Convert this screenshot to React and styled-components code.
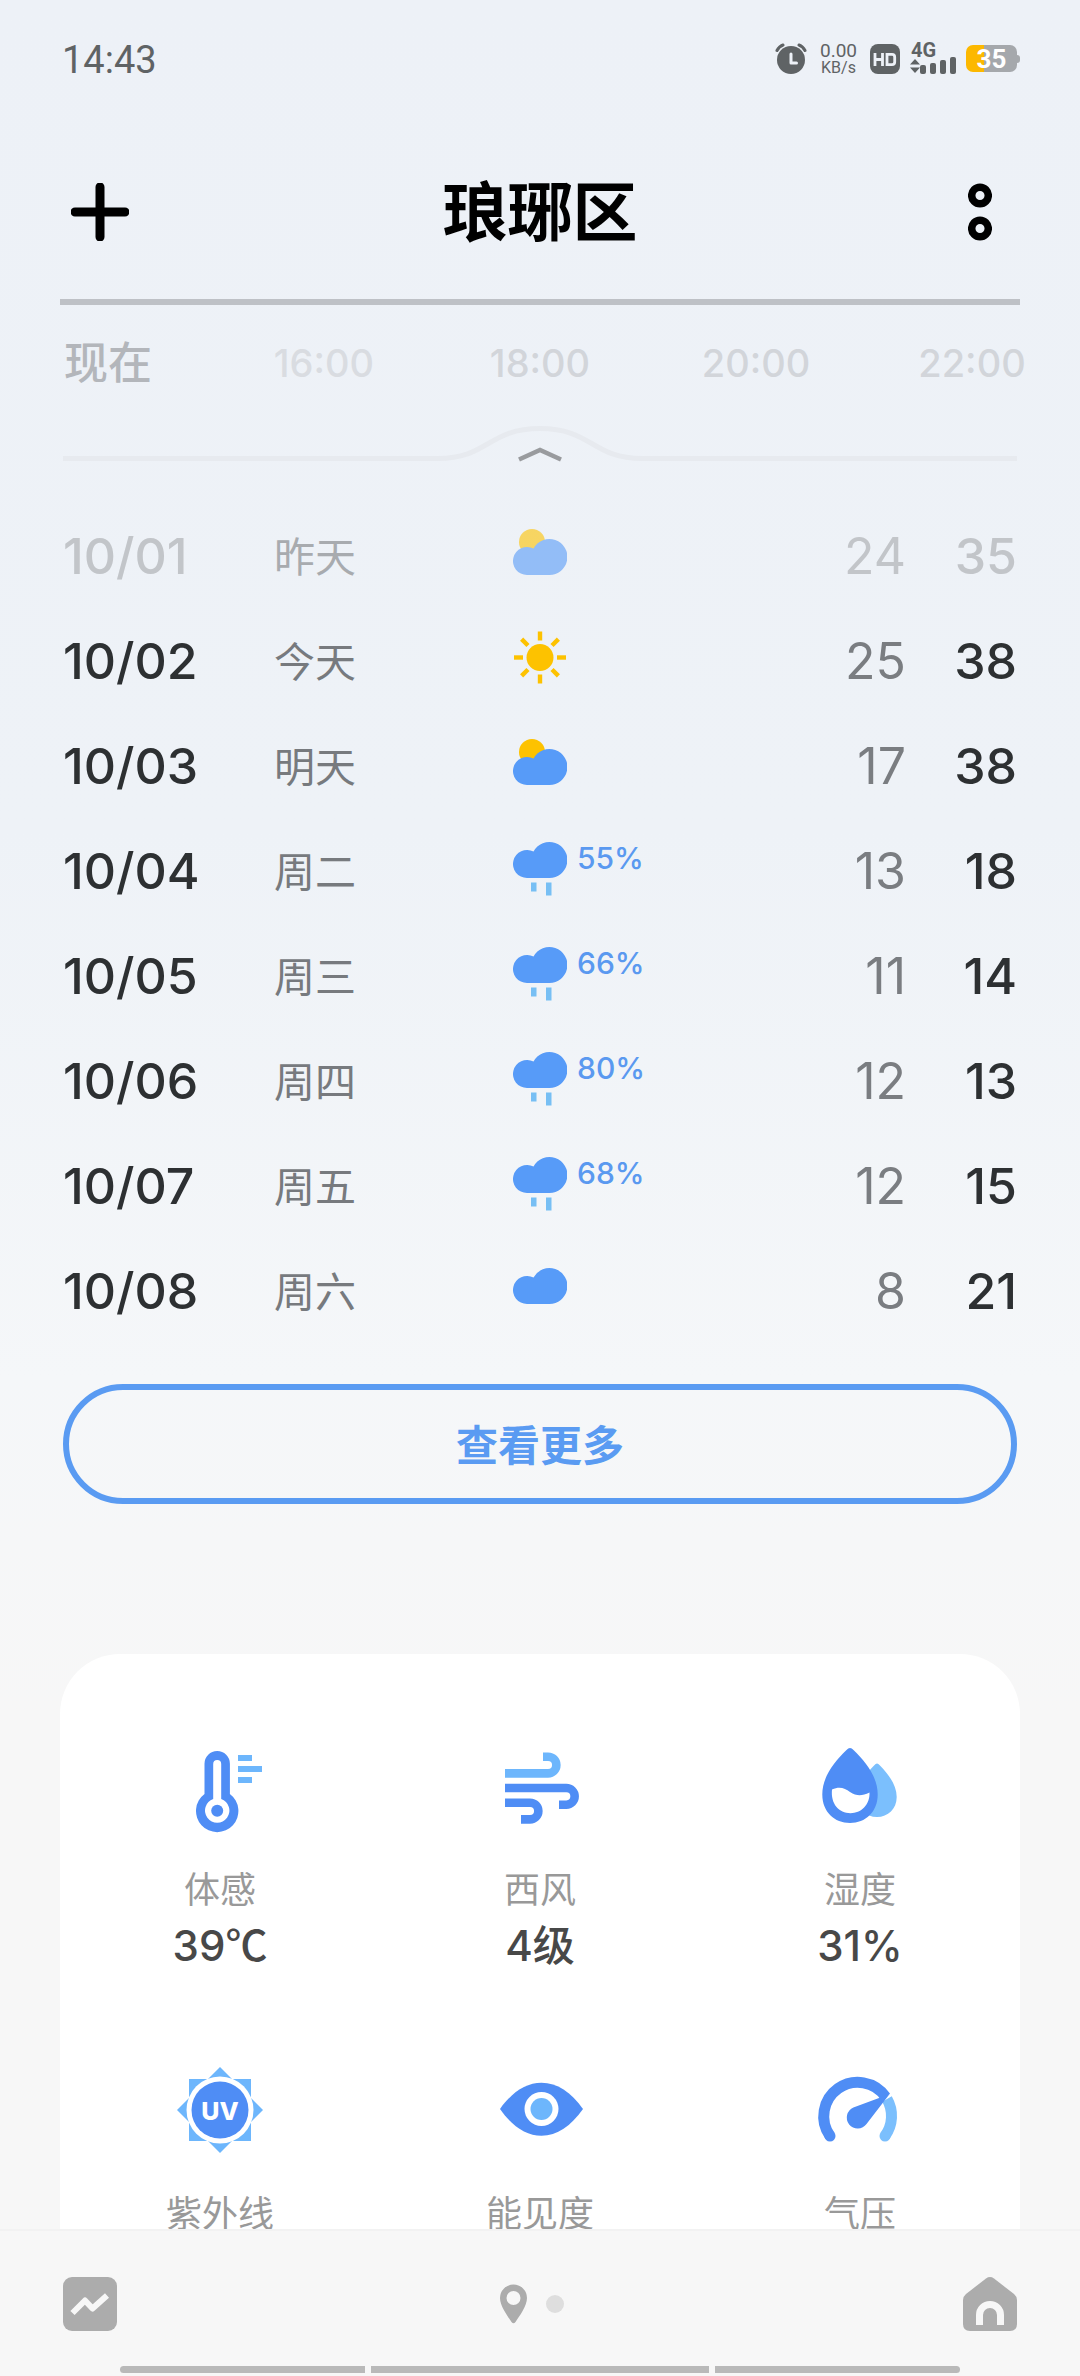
import React from 'react'
import styled, { createGlobalStyle } from 'styled-components'

const GlobalStyle = createGlobalStyle`
  * {
    box-sizing: border-box;
  }
  body {
    margin: 0;
    background: #f7f7f7;
    font-family: Inter, "Noto Sans CJK SC", sans-serif;
  }
  button {
    padding: 0;
    border: none;
    background: none;
    font-family: inherit;
    cursor: pointer;
  }
  svg {
    display: block;
  }
`
const Screen = styled.div`
  display: flex;
  flex-direction: column;
  height: 100vh;
  background: linear-gradient(#edf1f7 0%, #eef2f7 35%, #f5f7f9 58%, #f7f7f7 72%);
`
const StatusBar = styled.div`
  display: flex;
  flex-shrink: 0;
  align-items: center;
  justify-content: space-between;
  height: 120px;
  padding: 0 60px 0 62px;
  color: #5f6365;
  font-family: Roboto, sans-serif;
`
const Clock = styled.time`
  font-size: 38px;
`
const StatusIcons = styled.div`
  display: flex;
  align-items: center;
  gap: 10px;
  padding-bottom: 3px;
`
const NetSpeed = styled.div`
  display: flex;
  flex-direction: column;
  align-items: center;
  margin: 0 3px;
  font-size: 16px;
  line-height: 17px;
`
const SpeedValue = styled.span`
  font-size: 19px;
`
const Battery = styled.div`
  display: flex;
  align-items: center;
`
const BatteryBody = styled.div`
  width: 51px;
  height: 27px;
  border-radius: 7px;
  background: linear-gradient(90deg, #fcb800 35%, #a5a8ac 35%);
  color: #fff;
  font-size: 26px;
  font-weight: 700;
  line-height: 29px;
  text-align: center;
`
const BatteryTip = styled.div`
  width: 3px;
  height: 8px;
  border-radius: 0 3px 3px 0;
  background: #a5a8ac;
`
const Header = styled.header`
  display: flex;
  flex-shrink: 0;
  align-items: center;
  justify-content: space-between;
  margin: 0 60px;
  padding: 56px 0 51px;
  border-bottom: 6px solid #bec1c6;
`
const City = styled.h1`
  margin: 0;
  padding-top: 2px;
  color: #000;
  font-size: 65px;
  font-weight: 700;
  line-height: 70px;
`
const HeaderButton = styled.button`
  display: flex;
  align-items: center;
  justify-content: center;
  width: 80px;
  height: 72px;
`
const Content = styled.main`
  flex: 1;
  min-height: 0;
  overflow: hidden;
`
const Hours = styled.div`
  display: grid;
  grid-template-columns: repeat(5, 1fr);
  padding-top: 28px;
`
const Hour = styled.span`
  color: ${({ $tone }) => $tone};
  font-size: ${({ $now }) => ($now ? 44 : 38)}px;
  font-weight: 500;
  line-height: 60px;
  text-align: center;
`
const Fold = styled.div`
  display: flex;
  align-items: flex-end;
  margin: 32px 63px 0;
`
const FoldLine = styled.div`
  flex: 1;
  height: 5px;
  margin-bottom: 4px;
  background: #e7eaef;
`
const Days = styled.table`
  width: calc(100% - 126px);
  margin: 38px 63px 0;
  border-collapse: collapse;
  table-layout: fixed;
`
const DayRow = styled.tr`
  height: 105px;
  color: ${({ $past }) => ($past ? '#c2c5c9' : '#2d3032')};
`
const Cell = styled.td`
  width: ${({ $width }) => $width};
  padding: 0;
  font-size: 50px;
  line-height: 60px;
`
const DateCell = styled(Cell)`
  font-weight: 500;
`
const NameCell = styled(Cell)`
  padding-top: 2px;
  color: ${({ $past }) => ($past ? '#a8abaf' : '#777a7e')};
  font-size: 41px;
`
const LowCell = styled(Cell)`
  color: ${({ $past }) => ($past ? '#c2c5c9' : '#7a7d81')};
  text-align: right;
`
const HighCell = styled(Cell)`
  font-weight: 500;
  text-align: right;
`
const Sky = styled.div`
  display: flex;
  align-items: flex-start;
  gap: 10px;
  height: 66px;
  opacity: ${({ $past }) => ($past ? 0.6 : 1)};
`
const Chance = styled.span`
  color: #5a99f0;
  font-size: 30px;
  font-weight: 500;
  line-height: 40px;
`
const MoreButton = styled.button`
  display: block;
  width: calc(100% - 126px);
  height: 120px;
  margin: 41px 63px 0;
  padding-bottom: 3px;
  border: 6px solid #5a9bf2;
  border-radius: 60px;
  color: #5a9bf2;
  font-size: 42px;
  font-weight: 700;
`
const Card = styled.section`
  display: grid;
  grid-template-columns: repeat(3, 1fr);
  row-gap: 87px;
  margin: 150px 60px 0;
  padding: 85px 0;
  border-radius: 60px;
  background: #fff;
`
const Metric = styled.div`
  display: flex;
  flex-direction: column;
  align-items: center;
`
const MetricName = styled.span`
  margin-top: 31px;
  color: #999;
  font-size: 36px;
  line-height: 48px;
`
const MetricValue = styled.span`
  margin-top: 2px;
  color: #484848;
  font-size: 42px;
  font-weight: 500;
  line-height: 60px;
`
const Unit = styled.span`
  font-family: "Noto Sans CJK SC", sans-serif;
  line-height: 1;
`
const Footer = styled.footer`
  flex-shrink: 0;
  border-top: 2px solid #f2f2f2;
  background: #f7f7f7;
`
const FooterRow = styled.nav`
  display: flex;
  align-items: center;
  justify-content: space-between;
  padding: 46px 63px 35px;
`
const Pager = styled.div`
  display: flex;
  align-items: center;
  gap: 19px;
  margin-right: 16px;
`
const PageDot = styled.span`
  width: 18px;
  height: 18px;
  border-radius: 50%;
  background: #dedede;
`
const Gestures = styled.div`
  display: flex;
  gap: 6px;
  margin: 0 120px;
  padding-bottom: 3px;
`
const Gesture = styled.div`
  flex: ${({ $grow }) => $grow};
  height: 7px;
  background: #b9b9b9;

  &:first-child {
    border-radius: 4px 0 0 4px;
  }
  &:last-child {
    border-radius: 0 4px 4px 0;
  }
`

const DARK = '#4f8df5'
const LIGHT = '#6db6fc'

const AlarmIcon = () => (
  <svg width="32" height="32" viewBox="0 0 32 32" fill="none">
    <circle cx="16" cy="17" r="14" fill="#5f6365" />
    <path d="M2 7.500Q4 3.500 8 2M30 7.500Q28 3.500 24 2" stroke="#5f6365" strokeWidth="3" strokeLinecap="round" />
    <path d="M16 11V20H21.500" stroke="#edf1f7" strokeWidth="3" strokeLinecap="round" strokeLinejoin="round" />
  </svg>
)

const HdIcon = () => (
  <svg width="30" height="30" viewBox="0 0 30 30">
    <rect width="30" height="30" rx="8" fill="#5f6365" />
    <path d="M5 9V22M12.500 9V22M5 15.500H12.500M17 10.300H22Q24.700 10.300 24.700 13V18Q24.700 20.700 22 20.700H17Z" fill="none" stroke="#edf1f7" strokeWidth="2.800" />
  </svg>
)

const SignalIcon = () => (
  <svg width="46" height="43" viewBox="0 -6 46 43" fill="#5f6365">
    <text x="1" y="14" fontFamily="Roboto" fontSize="20" fontWeight="700">4G</text>
    <path d="M5 16L10 21.500H0ZM5 30L0 24.500H10Z" />
    <rect x="10" y="22" width="6" height="9" rx="2" />
    <rect x="20" y="20" width="6" height="11" rx="2" />
    <rect x="30" y="17" width="6" height="14" rx="2" />
    <rect x="40" y="14" width="6" height="17" rx="2" />
  </svg>
)

const cloud = 'M14 46A14 14 0 1 1 20.500 19.600A18 18 0 1 1 36 46Z'

const SkyIcon = ({ type }) => (
  <svg width="54" height="66" viewBox="0 0 54 66">
    {type === 'sun' && (
      <g fill="#fdc200">
        <circle cx="27" cy="29.500" r="13.500" />
        {[0, 45, 90, 135, 180, 225, 270, 315].map((deg) => (
          <rect key={deg} x="24.800" y="3.500" width="4.400" height="9" transform={`rotate(${deg} 27 29.500)`} />
        ))}
      </g>
    )}
    {type === 'partly' && (
      <>
        <circle cx="19" cy="19" r="13" fill="#fdc200" />
        <path d={cloud} transform="translate(0 6)" fill="#579bf8" />
      </>
    )}
    {type === 'cloud' && <path d={cloud} fill="#579bf8" />}
    {type === 'rain' && (
      <>
        <path d={cloud} transform="translate(0 -6)" fill="#579bf8" />
        <path d="M18 44.500H23.500V53.500H18ZM33 44.500H38.500V57.500H33Z" fill="#77bff4" />
      </>
    )}
  </svg>
)

const MetricIcon = ({ children }) => (
  <svg width="96" height="96" viewBox="0 0 96 96" fill="none">
    {children}
  </svg>
)

const FeelsIcon = () => (
  <MetricIcon>
    <path d="M32.500 55V24.700a12.700 12.700 0 0 1 25.400 0V55a21.200 21.200 0 1 1 -25.400 0Z" fill={DARK} />
    <path d="M41.200 60V25a4 4 0 0 1 8 0V60a12.200 12.200 0 1 1 -8 0Z" fill="#fff" />
    <circle cx="45.200" cy="71.800" r="6" fill={DARK} />
    <path d="M66 16H80V22H66ZM66 27H90V33H66ZM66 38H80V44H66Z" fill={LIGHT} />
  </MetricIcon>
)

const WindIcon = () => (
  <MetricIcon>
    <path d="M13 34.400H56a8.350 8.350 0 0 0 0 -16.700H51" stroke={LIGHT} strokeWidth="8.600" />
    <path d="M13 49H74.300a8.350 8.350 0 0 1 0 16.700H67M13 63.700H38a8.350 8.350 0 0 1 0 16.700H29" stroke={DARK} strokeWidth="8.600" />
  </MetricIcon>
)

const HumidityIcon = () => (
  <MetricIcon>
    <path d="M62.300 26.200Q65 23 67.700 26.200C77 36 84.700 46 84.700 58C84.700 70 76 78 65 78S45.300 70 45.300 58C45.300 46 53 36 62.300 26.200Z" fill="#7bbffd" />
    <path d="M34.500 11Q38 7 41.500 11C54 23 65.700 38 65.700 55.500C65.700 73 53.500 84 38 84S10.300 73 10.300 55.500C10.300 38 22 23 34.500 11Z" fill={DARK} />
    <path d="M20 50.500C28 47 33 49.500 38 53C45 57.500 50 57 57.500 53.500C58 66 49 74.200 38.500 74.200C27 74.200 18.500 65 20 50.500Z" fill="#fff" />
  </MetricIcon>
)

const UvIcon = () => (
  <MetricIcon>
    <path d="M17 16H79V78H17Z" fill={LIGHT} />
    <path d="M48 4L91 47L48 90L5 47Z" fill={LIGHT} />
    <circle cx="48" cy="47" r="33.500" fill="#fff" />
    <circle cx="48" cy="47" r="28.500" fill={DARK} />
    <text x="48" y="57" textAnchor="middle" fontFamily="Inter" fontSize="25" fontWeight="800" fill="#fff">UV</text>
  </MetricIcon>
)

const EyeIcon = () => (
  <MetricIcon>
    <path d="M8 46C20 29 34 19.700 49.500 19.700S79 29 91 46C79 63 65 72.700 49.500 72.700S20 63 8 46Z" fill={DARK} />
    <circle cx="49.500" cy="46" r="17" fill="#fff" />
    <circle cx="49.500" cy="46" r="11" fill={LIGHT} />
  </MetricIcon>
)

const PressureIcon = () => (
  <MetricIcon>
    <path d="M73 73A34 34 0 0 0 75 36" stroke="#7bbffd" strokeWidth="11" />
    <circle cx="73" cy="73" r="5.500" fill="#7bbffd" />
    <path d="M18 73A34 34 0 0 1 73.500 33.700" stroke={DARK} strokeWidth="11" />
    <circle cx="18" cy="73" r="5.500" fill={DARK} />
    <path d="M78 30.600L67 35L41.400 44.600A10.900 10.900 0 1 0 54.500 61Z" fill={DARK} />
  </MetricIcon>
)

const days = [
  { date: '10/01', name: '昨天', type: 'partly', low: 24, high: 35, past: true },
  { date: '10/02', name: '今天', type: 'sun', low: 25, high: 38 },
  { date: '10/03', name: '明天', type: 'partly', low: 17, high: 38 },
  { date: '10/04', name: '周二', type: 'rain', chance: '55%', low: 13, high: 18 },
  { date: '10/05', name: '周三', type: 'rain', chance: '66%', low: 11, high: 14 },
  { date: '10/06', name: '周四', type: 'rain', chance: '80%', low: 12, high: 13 },
  { date: '10/07', name: '周五', type: 'rain', chance: '68%', low: 12, high: 15 },
  { date: '10/08', name: '周六', type: 'cloud', low: 8, high: 21 },
]

const metrics = [
  { name: '体感', value: '39', unit: '℃', Icon: FeelsIcon },
  { name: '西风', value: '4', unit: '级', Icon: WindIcon },
  { name: '湿度', value: '31%', Icon: HumidityIcon },
  { name: '紫外线', Icon: UvIcon },
  { name: '能见度', Icon: EyeIcon },
  { name: '气压', Icon: PressureIcon },
]

const App = () => {
  return (
    <Screen>
      <GlobalStyle />
      <StatusBar>
        <Clock>14:43</Clock>
        <StatusIcons>
          <AlarmIcon />
          <NetSpeed>
            <SpeedValue>0.00</SpeedValue>
            <span>KB/s</span>
          </NetSpeed>
          <HdIcon />
          <SignalIcon />
          <Battery>
            <BatteryBody>35</BatteryBody>
            <BatteryTip />
          </Battery>
        </StatusIcons>
      </StatusBar>
      <Header>
        <HeaderButton aria-label="添加">
          <svg width="58" height="58" viewBox="0 0 58 58">
            <path d="M29 4V54M4 29H54" stroke="#000" strokeWidth="9" strokeLinecap="round" />
          </svg>
        </HeaderButton>
        <City>琅琊区</City>
        <HeaderButton aria-label="菜单">
          <svg width="24" height="58" viewBox="0 0 24 58" fill="none" stroke="#000" strokeWidth="7.500">
            <circle cx="12" cy="12.500" r="8.300" />
            <circle cx="12" cy="45.500" r="8.300" />
          </svg>
        </HeaderButton>
      </Header>
      <Content>
        <Hours>
          <Hour $now $tone="#b3b6bb">现在</Hour>
          <Hour $tone="#d9dce1">16:00</Hour>
          <Hour $tone="#d2d5da">18:00</Hour>
          <Hour $tone="#d2d5da">20:00</Hour>
          <Hour $tone="#d2d5da">22:00</Hour>
        </Hours>
        <Fold>
          <FoldLine />
          <button aria-label="收起">
            <svg width="204" height="40" viewBox="0 0 204 40" fill="none">
              <path d="M0 33.500C50 33.500 50 3.500 102 3.500S154 33.500 204 33.500" stroke="#e7eaef" strokeWidth="5" />
              <path d="M81 34.500L102 25L123 34.500" stroke="#999b9e" strokeWidth="4.500" />
            </svg>
          </button>
          <FoldLine />
        </Fold>
        <Days>
          <tbody>
            {days.map((day) => (
              <DayRow key={day.date} $past={day.past}>
                <DateCell $width="211px">{day.date}</DateCell>
                <NameCell $width="239px" $past={day.past}>{day.name}</NameCell>
                <Cell>
                  <Sky $past={day.past}>
                    <SkyIcon type={day.type} />
                    {day.chance && <Chance>{day.chance}</Chance>}
                  </Sky>
                </Cell>
                <LowCell $width="100px" $past={day.past}>{day.low}</LowCell>
                <HighCell $width="111px">{day.high}</HighCell>
              </DayRow>
            ))}
          </tbody>
        </Days>
        <MoreButton>查看更多</MoreButton>
        <Card>
          {metrics.map(({ name, value, unit, Icon }) => (
            <Metric key={name}>
              <Icon />
              <MetricName>{name}</MetricName>
              {value && (
                <MetricValue>
                  {value}
                  {unit && <Unit>{unit}</Unit>}
                </MetricValue>
              )}
            </Metric>
          ))}
        </Card>
      </Content>
      <Footer>
        <FooterRow>
          <button aria-label="趋势">
            <svg width="54" height="54" viewBox="0 0 54 54" fill="none">
              <rect width="54" height="54" rx="9" fill="#acacac" />
              <path d="M9.500 36L22 23.500L29.500 31.500L44 18.500" stroke="#f7f7f7" strokeWidth="6" strokeLinejoin="round" />
            </svg>
          </button>
          <Pager>
            <svg width="27" height="40" viewBox="0 0 27 40">
              <path fillRule="evenodd" d="M13.500 0.500A13.500 13.500 0 0 1 27 14C27 22 19.500 32 15.500 38Q13.500 40.500 11.500 38C7.500 32 0 22 0 14A13.500 13.500 0 0 1 13.500 0.500ZM13.500 7a7 7 0 1 0 0 14a7 7 0 1 0 0 -14Z" fill="#acacac" />
            </svg>
            <PageDot />
          </Pager>
          <button aria-label="家居">
            <svg width="54" height="54" viewBox="0 0 54 54" fill="none">
              <path d="M23 1.500Q27 -1.300 31 1.500L51 17Q54 19.500 54 23V47Q54 54 47 54H7Q0 54 0 47V23Q0 19.500 3 17Z" fill="#acacac" />
              <path d="M16.500 48V38a10.500 10.500 0 0 1 21 0V48" stroke="#f7f7f7" strokeWidth="7" />
            </svg>
          </button>
        </FooterRow>
        <Gestures>
          <Gesture $grow={245} />
          <Gesture $grow={338} />
          <Gesture $grow={245} />
        </Gestures>
      </Footer>
    </Screen>
  )
}

export default App
